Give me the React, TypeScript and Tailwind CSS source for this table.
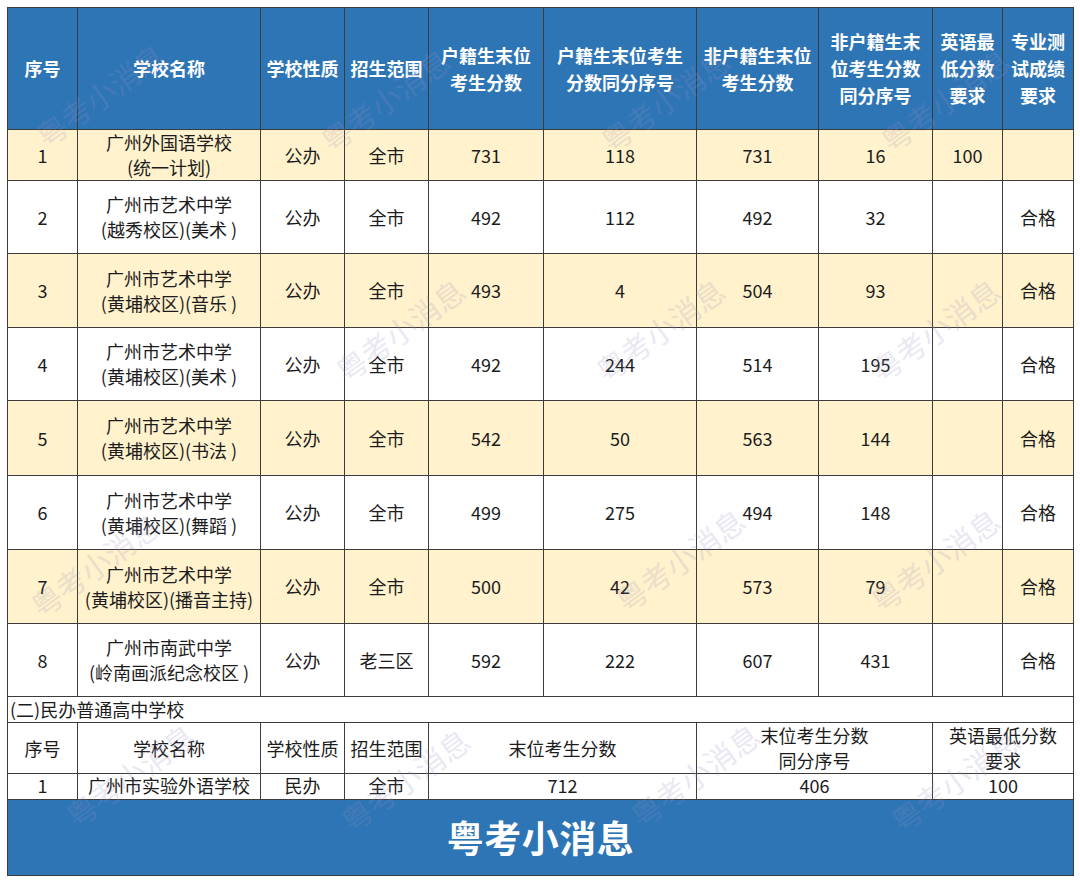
const head = [
  "序号",
  "学校名称",
  "学校性质",
  "招生范围",
  "户籍生末位\n考生分数",
  "户籍生末位考生\n分数同分序号",
  "非户籍生末位\n考生分数",
  "非户籍生末\n位考生分数\n同分序号",
  "英语最\n低分数\n要求",
  "专业测\n试成绩\n要求",
];

type Row = { h: string; cells: string[] };

const rows: Row[] = [
  { h: "h-[51px]", cells: ["1", "广州外国语学校\n(统一计划)", "公办", "全市", "731", "118", "731", "16", "100", ""] },
  { h: "h-[73px]", cells: ["2", "广州市艺术中学\n(越秀校区)(美术 )", "公办", "全市", "492", "112", "492", "32", "", "合格"] },
  { h: "h-[74px]", cells: ["3", "广州市艺术中学\n(黄埔校区)(音乐 )", "公办", "全市", "493", "4", "504", "93", "", "合格"] },
  { h: "h-[73px]", cells: ["4", "广州市艺术中学\n(黄埔校区)(美术 )", "公办", "全市", "492", "244", "514", "195", "", "合格"] },
  { h: "h-[75px]", cells: ["5", "广州市艺术中学\n(黄埔校区)(书法 )", "公办", "全市", "542", "50", "563", "144", "", "合格"] },
  { h: "h-[74px]", cells: ["6", "广州市艺术中学\n(黄埔校区)(舞蹈 )", "公办", "全市", "499", "275", "494", "148", "", "合格"] },
  { h: "h-[74px]", cells: ["7", "广州市艺术中学\n(黄埔校区)(播音主持)", "公办", "全市", "500", "42", "573", "79", "", "合格"] },
  { h: "h-[73px]", cells: ["8", "广州市南武中学\n(岭南画派纪念校区 )", "公办", "老三区", "592", "222", "607", "431", "", "合格"] },
];

// watermark spots (centre of each)
const marks = [
  "left-[100px] top-[95px]",
  "left-[385px] top-[100px]",
  "left-[665px] top-[100px]",
  "left-[945px] top-[100px]",
  "left-[400px] top-[330px]",
  "left-[660px] top-[330px]",
  "left-[935px] top-[330px]",
  "left-[95px] top-[565px]",
  "left-[680px] top-[560px]",
  "left-[935px] top-[560px]",
  "left-[130px] top-[775px]",
  "left-[405px] top-[780px]",
  "left-[695px] top-[775px]",
  "left-[955px] top-[780px]",
];

const grid1 =
  "grid grid-cols-[70px_183px_84px_84px_115px_153px_122px_114px_70px_71px]";
const grid2 = "grid grid-cols-[70px_183px_84px_84px_268px_236px_141px]";
const cell =
  "flex items-center justify-center text-center border-r border-b border-[#3c3c3c]";

function Lines({ text }: { text: string }) {
  return (
    <span>
      {text.split("\n").map((l, i) => (
        <span key={i} className="block whitespace-nowrap">
          {l}
        </span>
      ))}
    </span>
  );
}

export default function App() {
  return (
    <div className="relative w-[1080px] h-[884px] bg-white overflow-hidden font-['Noto_Sans_CJK_SC',sans-serif] text-[#1c1c1c]">
      <div className="pl-[7px] pt-[7px] w-[1074px]">
        <div className="border-l border-t border-[#3c3c3c]">
          <div className={`${grid1} h-[122px] bg-[#2e75b6] text-white font-bold text-[18px] leading-[27px]`}>
            {head.map((h, i) => (
              <div key={i} className={cell}>
                <Lines text={h} />
              </div>
            ))}
          </div>

          {rows.map((r, ri) => (
            <div
              key={ri}
              className={`${grid1} ${r.h} ${ri % 2 === 0 ? "bg-[#fff2cc]" : "bg-white"} text-[18px] leading-[25px]`}
            >
              {r.cells.map((c, ci) => (
                <div key={ci} className={cell}>
                  <Lines text={c} />
                </div>
              ))}
            </div>
          ))}

          <div className="h-[26px] flex items-center pl-[2px] border-r border-b border-[#3c3c3c] text-[18px] leading-[25px]">
            (二)民办普通高中学校
          </div>
          <div className={`${grid2} h-[49px] text-[18px] leading-[25px]`}>
            {["序号", "学校名称", "学校性质", "招生范围", "末位考生分数", "末位考生分数\n同分序号", "英语最低分数\n要求"].map(
              (h, i) => (
                <div key={i} className={cell}>
                  <Lines text={h} />
                </div>
              )
            )}
          </div>
          <div className={`${grid2} h-[28px] text-[18px] leading-[25px]`}>
            {["1", "广州市实验外语学校", "民办", "全市", "712", "406", "100"].map((c, i) => (
              <div key={i} className={cell}>
                {c}
              </div>
            ))}
          </div>

          <div className="h-[76px] bg-[#2e75b6] border-r border-b border-[#3c3c3c] flex items-center justify-center">
            <span className="text-white font-bold text-[37px] tracking-[0.5px]">粤考小消息</span>
          </div>
        </div>
      </div>

      {marks.map((m, i) => (
        <div
          key={i}
          className={`pointer-events-none absolute ${m} -translate-x-1/2 -translate-y-1/2 -rotate-[36deg] whitespace-nowrap text-[30px] text-[#9a90c0] opacity-20`}
        >
          粤考小消息
        </div>
      ))}
    </div>
  );
}
